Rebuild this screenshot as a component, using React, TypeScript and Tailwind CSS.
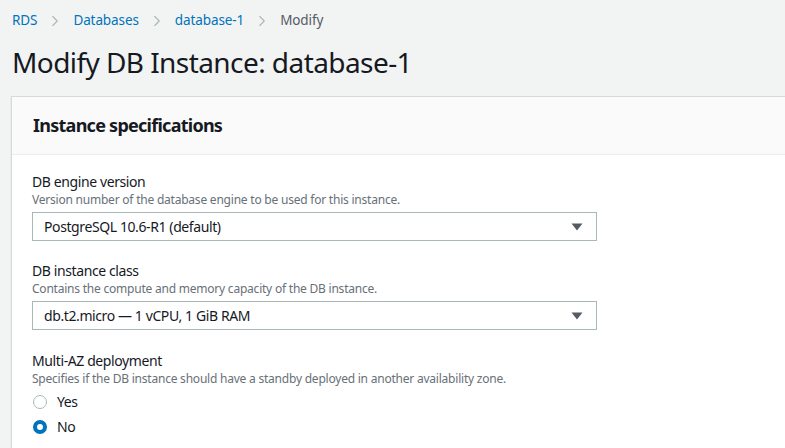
import { ChevronRight } from 'lucide-react';

const crumbs = ['RDS', 'Databases', 'database-1'];

function Caret() {
  return (
    <svg width="12" height="8" viewBox="0 0 12 8" className="text-[#545b64]">
      <path d="M0.5 0.5h11L6 7.5z" fill="currentColor" />
    </svg>
  );
}

function SelectField({ label, desc, value }: { label: string; desc: string; value: string }) {
  return (
    <div>
      <div className="text-[14px] leading-[20px] tracking-[-0.4px] text-[#16191f]">{label}</div>
      <div className="text-[12px] leading-[16px] tracking-[-0.22px] text-[#687078]">{desc}</div>
      <div className="mt-[4px] flex h-[29px] w-[565px] items-center justify-between border border-[#aab7b8] bg-white pl-[11px] pr-[13px]">
        <span className="text-[14px] tracking-[-0.4px] text-[#16191f]">{value}</span>
        <Caret />
      </div>
    </div>
  );
}

function Radio({ label, checked }: { label: string; checked?: boolean }) {
  return (
    <div className="flex h-[25px] items-center gap-[10px] pl-[1px]">
      {checked ? (
        <span className="box-border h-[14px] w-[14px] rounded-full border-[4px] border-[#0073bb] bg-white" />
      ) : (
        <span className="box-border h-[14px] w-[14px] rounded-full border-[1.5px] border-[#aab7b8] bg-white" />
      )}
      <span className="text-[14px] tracking-[-0.4px] text-[#16191f]">{label}</span>
    </div>
  );
}

export default function App() {
  return (
    <div className="h-[448px] w-[785px] overflow-hidden bg-[#f2f3f3] font-['Noto_Sans',sans-serif]">
      {/* Breadcrumbs */}
      <nav className="flex h-[40px] items-center pl-[12px] pt-[1px] text-[13.5px] tracking-[-0.1px]">
        {crumbs.map((c) => (
          <span key={c} className="flex items-center">
            <span className="text-[#0073bb]">{c}</span>
            <ChevronRight className="mx-[9px] h-[18px] w-[18px] text-[#aab7b8]" strokeWidth={1.5} />
          </span>
        ))}
        <span className="text-[#545b64]">Modify</span>
      </nav>

      <h1 className="pl-[12px] text-[28px] leading-[44px] tracking-[-0.57px] text-[#16191f]">
        Modify DB Instance: database-1
      </h1>

      {/* Panel */}
      <section className="ml-[11px] mt-[12px] w-[1000px] border border-[#d5dbdb] bg-white pb-[60px] shadow-[0_1px_1px_rgba(0,28,36,0.2)]">
        <header className="flex h-[58px] items-center border-b border-[#eaeded] bg-[#fafafa] px-[21px]">
          <h2 className="text-[18px] font-bold tracking-[-0.74px] text-[#16191f]">Instance specifications</h2>
        </header>
        <div className="flex flex-col px-[20px] pt-[17px]">
          <SelectField
            label="DB engine version"
            desc="Version number of the database engine to be used for this instance."
            value="PostgreSQL 10.6-R1 (default)"
          />
          <div className="mt-[20px]">
            <SelectField
              label="DB instance class"
              desc="Contains the compute and memory capacity of the DB instance."
              value="db.t2.micro — 1 vCPU, 1 GiB RAM"
            />
          </div>
          <div className="mt-[21px]">
            <div className="text-[14px] leading-[20px] tracking-[-0.4px] text-[#16191f]">Multi-AZ deployment</div>
            <div className="text-[12px] leading-[16px] tracking-[-0.22px] text-[#687078]">
              Specifies if the DB instance should have a standby deployed in another availability zone.
            </div>
            <div className="mt-[2px]">
              <Radio label="Yes" />
              <Radio label="No" checked />
            </div>
          </div>
        </div>
      </section>
    </div>
  );
}
